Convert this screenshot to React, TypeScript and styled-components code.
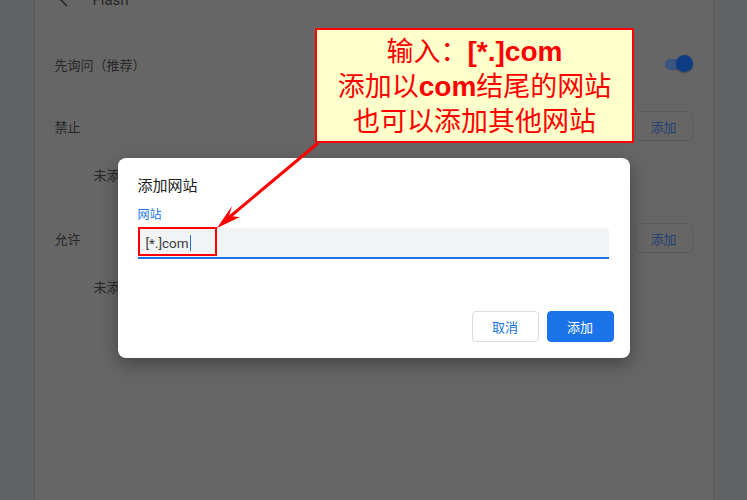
import React from 'react';
import styled, {createGlobalStyle} from 'styled-components';

const GlobalStyle = createGlobalStyle`
  html, body {
    margin: 0;
    padding: 0;
    height: 100%;
    overflow: hidden;
  }
  body {
    background: #616263;
    font-family: Roboto, "Noto Sans CJK SC", sans-serif;
  }
`

const Page = styled.div`
  width: 747px;
  height: 500px;
  display: flex;
  justify-content: center;
  overflow: hidden;
  position: relative;
`

const Card = styled.div`
  width: 680px;
  margin-top: -24px;
  background: #666666;
  border-left: 1px solid #595a5b;
  border-right: 1px solid #595a5b;
  padding: 0 20px;
  box-sizing: border-box;
  display: flex;
  flex-direction: column;
`

const Header = styled.div`
  height: 48px;
  display: flex;
  align-items: center;
  gap: 20px;
  color: #262626;
  font-size: 15px;
  padding-left: 2px;
`

const Row = styled.div<{$h: number; $indent?: boolean; $gapAfter?: number}>`
  height: ${p => p.$h}px;
  display: flex;
  align-items: center;
  justify-content: space-between;
  padding-left: ${p => (p.$indent ? 39 : 0)}px;
  margin-bottom: ${p => p.$gapAfter ?? 0}px;
  font-family: "Noto Sans CJK SC", sans-serif;
  font-size: 13px;
  color: #272727;
`

const DimButton = styled.div`
  width: 58px;
  height: 30px;
  box-sizing: border-box;
  border: 1px solid #5c5c5c;
  border-radius: 4px;
  display: flex;
  align-items: center;
  justify-content: center;
  color: #233f74;
  font-size: 13px;
`

const Toggle = styled.div`
  position: relative;
  width: 30px;
  height: 18px;
`

const Track = styled.div`
  position: absolute;
  left: 2px;
  top: 4px;
  width: 26px;
  height: 11px;
  border-radius: 6px;
  background: #3b5480;
`

const Knob = styled.div`
  position: absolute;
  right: 0;
  top: 0;
  width: 17px;
  height: 17px;
  border-radius: 50%;
  background: #0e3d86;
  box-shadow: 0 1px 2px rgba(0, 0, 0, 0.35);
`

const Layer = styled.div`
  position: absolute;
  inset: 0;
  display: flex;
  justify-content: center;
  align-items: flex-start;
  padding-top: 158px;
  box-sizing: border-box;
`

const Dialog = styled.div`
  width: 512px;
  height: 200px;
  background: #fff;
  border-radius: 8px;
  box-shadow: 0 6px 18px rgba(0, 0, 0, 0.35);
  box-sizing: border-box;
  padding: 16px 16px 16px 20px;
  display: flex;
  flex-direction: column;
  font-family: "Noto Sans CJK SC", sans-serif;
`

const Title = styled.div`
  font-size: 15px;
  line-height: 22px;
  color: #202124;
`

const Label = styled.div`
  margin-top: 10px;
  font-size: 12px;
  line-height: 16px;
  color: #1a73e8;
`

const InputBox = styled.div`
  margin-top: 6px;
  margin-right: 5px;
  height: 31px;
  box-sizing: border-box;
  background: #f1f3f4;
  border-radius: 4px 4px 0 0;
  border-bottom: 2px solid #1a73e8;
  display: flex;
  align-items: center;
  padding-left: 8px;
  font-family: Roboto, "Liberation Sans", sans-serif;
  font-size: 13.5px;
  color: #3c3c3c;
  position: relative;
`

const Caret = styled.span`
  display: inline-block;
  width: 1px;
  height: 16px;
  background: #1a73e8;
  margin-left: 1px;
`

const Mark = styled.div`
  position: absolute;
  left: 0;
  top: -1px;
  width: 79px;
  height: 29px;
  box-sizing: border-box;
  border: 2px solid #ff0000;
`

const Actions = styled.div`
  margin-top: auto;
  display: flex;
  justify-content: flex-end;
  gap: 8px;
`

const Button = styled.div<{$primary?: boolean}>`
  width: 67px;
  height: 31px;
  box-sizing: border-box;
  border-radius: 4px;
  display: flex;
  align-items: center;
  justify-content: center;
  font-size: 13px;
  border: 1px solid ${p => (p.$primary ? '#1a73e8' : '#dadce0')};
  background: ${p => (p.$primary ? '#1a73e8' : '#fff')};
  color: ${p => (p.$primary ? '#fff' : '#1a73e8')};
`

const Callout = styled.div`
  position: absolute;
  left: 315px;
  top: 28px;
  width: 319px;
  height: 115px;
  box-sizing: border-box;
  border: 2px solid #ff0000;
  background: #ffffcc;
  display: flex;
  flex-direction: column;
  align-items: center;
  justify-content: center;
  color: #ff0000;
  font-family: "Noto Sans CJK SC", sans-serif;
  font-size: 27px;
  line-height: 33px;
  padding-bottom: 2px;
`

const Bold = styled.b`
  font-family: "Liberation Sans", Arial, sans-serif;
  font-weight: 700;
  font-size: 28px;
`

const ArrowSvg = styled.svg`
  position: absolute;
  left: 0;
  top: 0;
  pointer-events: none;
`

export default function App() {
  return (
    <>
      <GlobalStyle/>
      <Page>
        <Card>
          <Header>
            <svg width="16" height="16" viewBox="0 0 16 16">
              <path d="M10 2 L4 8 L10 14" stroke="#262626" strokeWidth="1.6" fill="none"/>
            </svg>
            <span>Flash</span>
          </Header>
          <Row $h={80}>
            <span>先询问（推荐）</span>
            <Toggle>
              <Track/>
              <Knob/>
            </Toggle>
          </Row>
          <Row $h={44}>
            <span>禁止</span>
            <DimButton>添加</DimButton>
          </Row>
          <Row $h={52} $indent $gapAfter={16}>
            <span>未添加任何网站</span>
          </Row>
          <Row $h={44}>
            <span>允许</span>
            <DimButton>添加</DimButton>
          </Row>
          <Row $h={52} $indent>
            <span>未添加任何网站</span>
          </Row>
        </Card>

        <Layer>
          <Dialog>
            <Title>添加网站</Title>
            <Label>网站</Label>
            <InputBox>
              [*.]com<Caret/>
              <Mark/>
            </InputBox>
            <Actions>
              <Button>取消</Button>
              <Button $primary>添加</Button>
            </Actions>
          </Dialog>
        </Layer>

        <Callout>
          <div>输入：<Bold>[*.]com</Bold></div>
          <div>添加以<Bold>com</Bold>结尾的网站</div>
          <div>也可以添加其他网站</div>
        </Callout>

        <ArrowSvg width="747" height="500" viewBox="0 0 747 500">
          <line x1="318" y1="143" x2="226" y2="220" stroke="#ff0000" strokeWidth="3"/>
          <polygon points="217,228 232,206 229,216 240,217" fill="#ff0000"/>
        </ArrowSvg>
      </Page>
    </>
  );
}
